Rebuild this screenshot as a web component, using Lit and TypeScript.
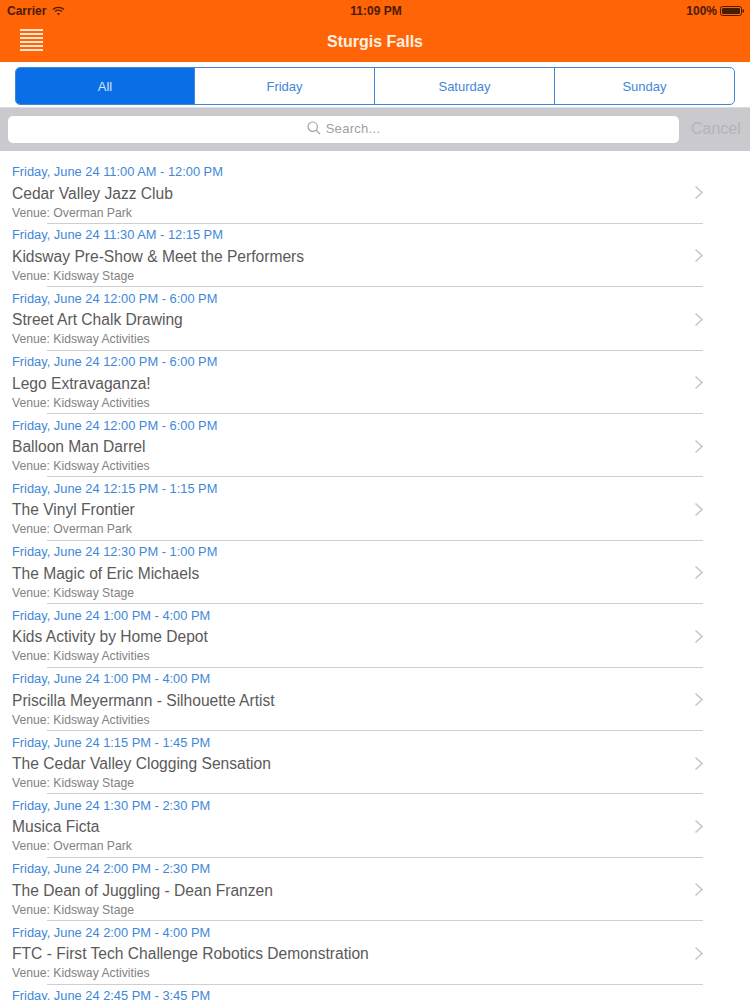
import { LitElement, html, css, svg } from "lit";
import { customElement } from "lit/decorators.js";

const rows: [string, string, string][] = [
  ["11:00 AM - 12:00 PM", "Cedar Valley Jazz Club", "Overman Park"],
  ["11:30 AM - 12:15 PM", "Kidsway Pre-Show & Meet the Performers", "Kidsway Stage"],
  ["12:00 PM - 6:00 PM", "Street Art Chalk Drawing", "Kidsway Activities"],
  ["12:00 PM - 6:00 PM", "Lego Extravaganza!", "Kidsway Activities"],
  ["12:00 PM - 6:00 PM", "Balloon Man Darrel", "Kidsway Activities"],
  ["12:15 PM - 1:15 PM", "The Vinyl Frontier", "Overman Park"],
  ["12:30 PM - 1:00 PM", "The Magic of Eric Michaels", "Kidsway Stage"],
  ["1:00 PM - 4:00 PM", "Kids Activity by Home Depot", "Kidsway Activities"],
  ["1:00 PM - 4:00 PM", "Priscilla Meyermann - Silhouette Artist", "Kidsway Activities"],
  ["1:15 PM - 1:45 PM", "The Cedar Valley Clogging Sensation", "Kidsway Stage"],
  ["1:30 PM - 2:30 PM", "Musica Ficta", "Overman Park"],
  ["2:00 PM - 2:30 PM", "The Dean of Juggling - Dean Franzen", "Kidsway Stage"],
  ["2:00 PM - 4:00 PM", "FTC - First Tech Challenge Robotics Demonstration", "Kidsway Activities"],
  ["2:45 PM - 3:45 PM", "", ""],
];

const chevron = svg`<path d="M1.5 1.5 L8 7.5 L1.5 13.5" fill="none" stroke="#c7c7cc" stroke-width="1.6"/>`;

@customElement("app-root")
export class AppRoot extends LitElement {
  static styles = css`
    :host {
      display: block;
      width: 750px;
      height: 1000px;
      overflow: hidden;
      background: #fff;
      font-family: "Liberation Sans", Arial, sans-serif;
    }
    .nav {
      height: 62px;
      background: #ff6407;
      display: flex;
      flex-direction: column;
    }
    .status {
      height: 20px;
      padding: 1px 5px 0 7px;
      box-sizing: border-box;
      display: grid;
      grid-template-columns: 1fr auto 1fr;
      align-items: center;
      font-size: 12px;
      font-weight: 700;
      color: #4a1c02;
    }
    .status .left { display: flex; align-items: center; gap: 6px; }
    .status .right { display: flex; align-items: center; justify-content: flex-end; gap: 3px; }
    .bar {
      height: 42px;
      display: grid;
      grid-template-columns: 1fr auto 1fr;
      align-items: center;
    }
    .menu { display: block; margin: 0 0 2px 20px; }
    .title {
      font-size: 16px;
      font-weight: 700;
      color: #fff0e2;
      padding-top: 1px;
    }
    .seg-wrap { padding: 5px 15px 2px; background: #fff; }
    .seg {
      display: grid;
      grid-template-columns: 178px 180px 180px 1fr;
      height: 38px;
      box-sizing: border-box;
      border: 1px solid #3f87d8;
      border-radius: 5px;
      overflow: hidden;
      font-size: 13px;
      color: #3f87d8;
    }
    .seg div {
      display: flex;
      align-items: center;
      justify-content: center;
      border-left: 1px solid #3f87d8;
    }
    .seg div:first-child { border-left: 0; }
    .seg .on { background: #0a6ee6; color: #d4e4fa; }
    .search {
      height: 44px;
      background: #c9c9ce;
      border-top: 1px solid #dcdcdf;
      box-sizing: border-box;
      display: flex;
      align-items: center;
      padding: 0 8px 1px;
      gap: 12px;
    }
    .field {
      width: 671px;
      height: 27px;
      box-sizing: border-box;
      padding-bottom: 2px;
      background: #fff;
      border-radius: 5px;
      display: flex;
      align-items: center;
      justify-content: center;
      gap: 5px;
      font-size: 13px;
      color: #a0a0a5;
      letter-spacing: 0.3px;
    }
    .cancel { font-size: 16px; color: #b4b4ba; }
    .list { padding-top: 9.5px; }
    .row {
      height: 63.4px;
      box-sizing: border-box;
      position: relative;
      padding-left: 12px;
    }
    .row::after {
      content: "";
      position: absolute;
      left: 47px;
      right: 47px;
      bottom: 0;
      height: 1px;
      background: #cfcfd2;
    }
    .time { font-size: 12.85px; line-height: 14px; padding-top: 4.5px; color: #3f87d8; }
    .name { font-size: 15.6px; line-height: 18px; padding-top: 5.5px; color: #5a5a5a; }
    .venue { font-size: 12.2px; line-height: 14px; padding-top: 3px; color: #828282; }
    .chev { position: absolute; left: 694px; top: 24.5px; display: block; }
  `;

  render() {
    return html`
      <div class="nav">
        <div class="status">
          <div class="left">
            <span>Carrier</span>
            <svg width="13" height="10" viewBox="0 0 13 10" fill="none" stroke="#4a1c02">
              <path d="M1 3.6 C4 .6 9 .6 12 3.6" stroke-width="1.4"/>
              <path d="M3 5.6 C5 3.8 8 3.8 10 5.6" stroke-width="1.4"/>
              <path d="M6.5 9.2 L4.9 7.4 C5.8 6.7 7.2 6.7 8.1 7.4 Z" fill="#4a1c02" stroke="none"/>
            </svg>
          </div>
          <span>11:09 PM</span>
          <div class="right">
            <span>100%</span>
            <svg width="25" height="10" viewBox="0 0 25 10">
              <rect x=".5" y=".5" width="21" height="9" rx="2" fill="none" stroke="#4a1c02"/>
              <rect x="2" y="2" width="18" height="6" rx="1" fill="#4a1c02"/>
              <rect x="22.5" y="3.5" width="1.5" height="3" fill="#4a1c02"/>
            </svg>
          </div>
        </div>
        <div class="bar">
          <svg class="menu" width="23" height="22" viewBox="0 0 23 22" fill="#ffe6d2">
            <rect y="0" width="23" height="2"/><rect y="4" width="23" height="2"/>
            <rect y="8" width="23" height="2"/><rect y="12" width="23" height="2"/>
            <rect y="16" width="23" height="2"/><rect y="20" width="23" height="2"/>
          </svg>
          <div class="title">Sturgis Falls</div>
          <div></div>
        </div>
      </div>
      <div class="seg-wrap">
        <div class="seg">
          <div class="on">All</div><div>Friday</div><div>Saturday</div><div>Sunday</div>
        </div>
      </div>
      <div class="search">
        <div class="field">
          <svg width="14" height="14" viewBox="0 0 14 14" fill="none" stroke="#a0a0a5" stroke-width="1.2">
            <circle cx="5.7" cy="5.7" r="4.7"/><path d="M9.2 9.2 L13 13"/>
          </svg>
          <span>Search...</span>
        </div>
        <div class="cancel">Cancel</div>
      </div>
      <div class="list">
        ${rows.map(
          ([t, n, v]) => html`
            <div class="row">
              <div class="time">Friday, June 24 ${t}</div>
              <div class="name">${n}</div>
              <div class="venue">Venue: ${v}</div>
              <svg class="chev" width="10" height="15" viewBox="0 0 10 15">${chevron}</svg>
            </div>
          `
        )}
      </div>
    `;
  }
}
